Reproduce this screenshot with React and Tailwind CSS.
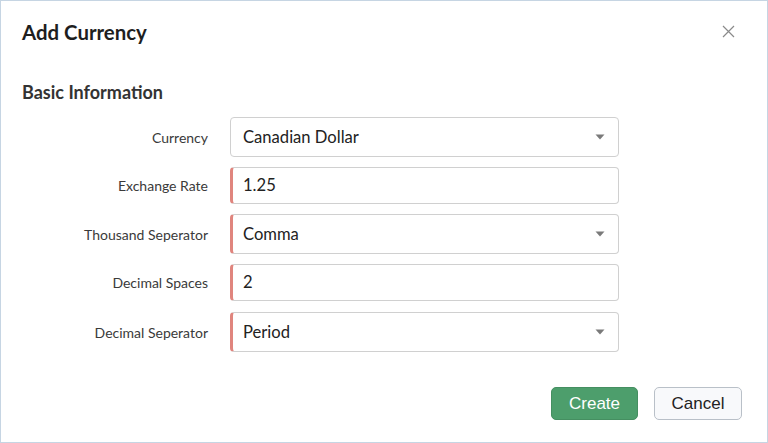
import React from "react";

const Caret = () => (
  <svg width="10" height="6" viewBox="0 0 10 6" className="absolute right-[13px] top-1/2 -translate-y-1/2">
    <path d="M0.5 0.5 L9.5 0.5 L5 5.5 Z" fill="#7a7a7a" />
  </svg>
);

function Row({ label, value, select, required }) {
  return (
    <div className="flex items-center">
      <div className="w-[207px] text-right text-[14px] text-[#3a3a3a] pr-0">{label}</div>
      <div
        className={
          "relative ml-[22px] w-[389px] flex items-center bg-white rounded-[4px] border border-[#d0d0d0] " +
          (select ? "h-[40px] " : "h-[37px] ") +
          (required ? "border-l-[3px] border-l-[#e0857e] pl-[10px]" : "pl-[12px]")
        }
      >
        <span className="text-[16.6px] text-[#222]">{value}</span>
        {select && <Caret />}
      </div>
    </div>
  );
}

export default function App() {
  return (
    <div
      className="w-[768px] h-[443px] border border-[#c6d5e3] bg-white relative flex flex-col"
      style={{ fontFamily: "Lato, 'Noto Sans', sans-serif" }}
    >
      <div className="flex items-center justify-between pl-[21px] pr-[32px] pt-[19px]">
        <h1 className="text-[20.4px] leading-[24px] font-bold text-[#1e1e1e]">Add Currency</h1>
        <svg width="13" height="13" viewBox="0 0 13 13" className="mt-[-1px]">
          <path d="M1 1 L12 12 M12 1 L1 12" stroke="#8a8a8a" strokeWidth="1.2" fill="none" />
        </svg>
      </div>
      <h2 className="pl-[21px] mt-[38px] text-[18px] leading-[20px] font-bold text-[#333]">Basic Information</h2>
      <div className="mt-[15px] flex flex-col gap-[10px]">
        <Row label="Currency" value="Canadian Dollar" select />
        <Row label="Exchange Rate" value="1.25" required />
        <Row label="Thousand Seperator" value="Comma" select required />
        <Row label="Decimal Spaces" value="2" required />
        <div className="mt-[1px]">
          <Row label="Decimal Seperator" value="Period" select required />
        </div>
      </div>
      <div
        className="mt-auto mb-[22px] flex justify-end gap-[16px] pr-[25px]"
        style={{ fontFamily: "'Liberation Sans', Arial, sans-serif" }}
      >
        <button className="w-[87px] h-[33px] rounded-[5px] bg-[#4d9e6c] border border-[#458f61] text-white text-[17px]">
          Create
        </button>
        <button className="w-[88px] h-[33px] rounded-[5px] bg-[#f8f9fb] border border-[#b9c0c8] text-[#222] text-[17px]">
          Cancel
        </button>
      </div>
    </div>
  );
}
